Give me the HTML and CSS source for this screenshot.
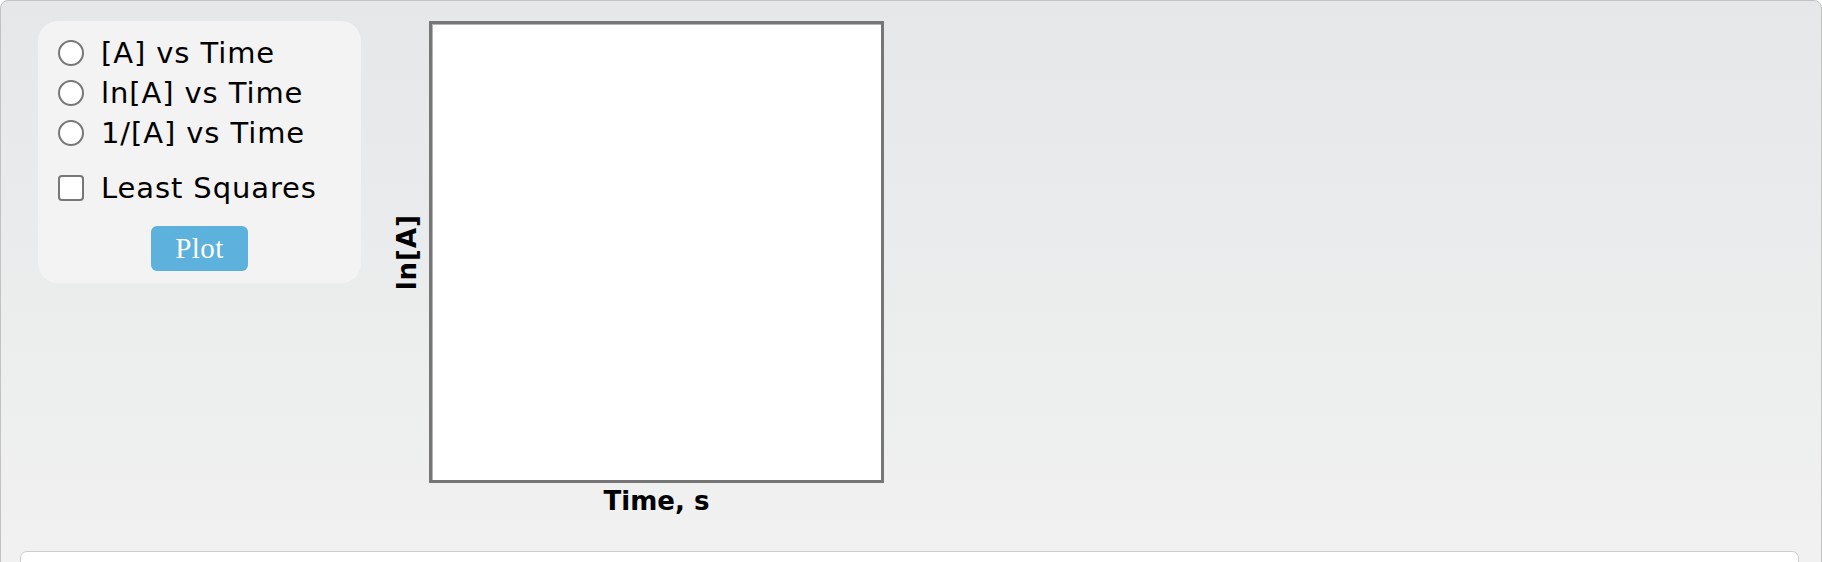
FILE: index.html
```html
<!DOCTYPE html>
<html>
<head>
<meta charset="utf-8">
<link rel="stylesheet" href="styles.css">
</head>
<body>
<div class="app">
  <div class="top">
    <div class="controls">
      <label class="row"><input type="radio" name="plot" class="radio"><span>[A] vs Time</span></label>
      <label class="row"><input type="radio" name="plot" class="radio"><span>ln[A] vs Time</span></label>
      <label class="row"><input type="radio" name="plot" class="radio"><span>1/[A] vs Time</span></label>
      <label class="row check-row"><input type="checkbox" class="check"><span>Least Squares</span></label>
      <div class="btn-wrap"><button class="plot-btn">Plot</button></div>
    </div>
    <div class="chart">
      <div class="ylabel"><span>ln[A]</span></div>
      <div class="plot-col">
        <div class="plot"></div>
        <div class="xlabel">Time, s</div>
      </div>
    </div>
  </div>
  <div class="output"></div>
</div>
</body>
</html>
```
FILE: styles.css
```css
html, body {
  margin: 0;
  padding: 0;
  background: #ffffff;
}
body {
  width: 1822px;
  height: 562px;
  overflow: hidden;
  font-family: "DejaVu Sans", Verdana, sans-serif;
}
.app {
  box-sizing: border-box;
  width: 1822px;
  height: 620px;
  border: 1px solid #c2c2c2;
  border-radius: 8px;
  background: linear-gradient(to bottom, #e6e7e9 0px, #f0f1f0 560px);
  padding: 20px 22px 0 19px;
}
.top {
  display: flex;
  align-items: flex-start;
  padding-left: 18px;
}
.controls {
  box-sizing: border-box;
  width: 323px;
  height: 262px;
  background: #f3f3f3;
  border-radius: 20px;
  padding: 12px 0 0 20px;
  display: flex;
  flex-direction: column;
}
.row {
  display: flex;
  align-items: center;
  height: 40px;
  font-size: 29px;
  letter-spacing: 0.9px;
  color: #000;
}
.check-row {
  margin-top: 15px;
}
.radio, .check {
  appearance: none;
  -webkit-appearance: none;
  margin: 0 17px 0 0;
  box-sizing: border-box;
  width: 26px;
  height: 26px;
  background: #fff;
  border: 2px solid #777777;
  flex: none;
}
.radio {
  border-radius: 50%;
}
.check {
  border-radius: 4px;
}
.btn-wrap {
  display: flex;
  justify-content: center;
  margin-top: 18px;
  padding-right: 20px;
}
.plot-btn {
  width: 97px;
  height: 45px;
  border: none;
  border-radius: 6px;
  background: #5db1dd;
  color: #fff;
  font-family: "Liberation Serif", "Times New Roman", serif;
  font-size: 29px;
  letter-spacing: 0.5px;
  padding: 0;
}
.chart {
  display: flex;
  align-items: flex-start;
  margin-left: 31px;
}
.ylabel {
  width: 30px;
  height: 462px;
  display: flex;
  align-items: center;
  justify-content: center;
  margin-right: 7px;
}
.ylabel span {
  writing-mode: vertical-rl;
  transform: rotate(180deg);
  font-weight: bold;
  font-size: 26px;
  letter-spacing: 1px;
  line-height: 30px;
}
.plot-col {
  display: flex;
  flex-direction: column;
  align-items: center;
}
.plot {
  box-sizing: border-box;
  width: 455px;
  height: 462px;
  background: #fff;
  border: 3px solid #767676;
  box-shadow: inset 1px 1px 0 #b5b5b5;
}
.xlabel {
  font-weight: bold;
  font-size: 26px;
  line-height: 30px;
  margin-top: 3px;
}
.output {
  margin-top: 35px;
  height: 80px;
  background: #fff;
  border: 1px solid #cccccc;
  border-radius: 7px;
}
```
